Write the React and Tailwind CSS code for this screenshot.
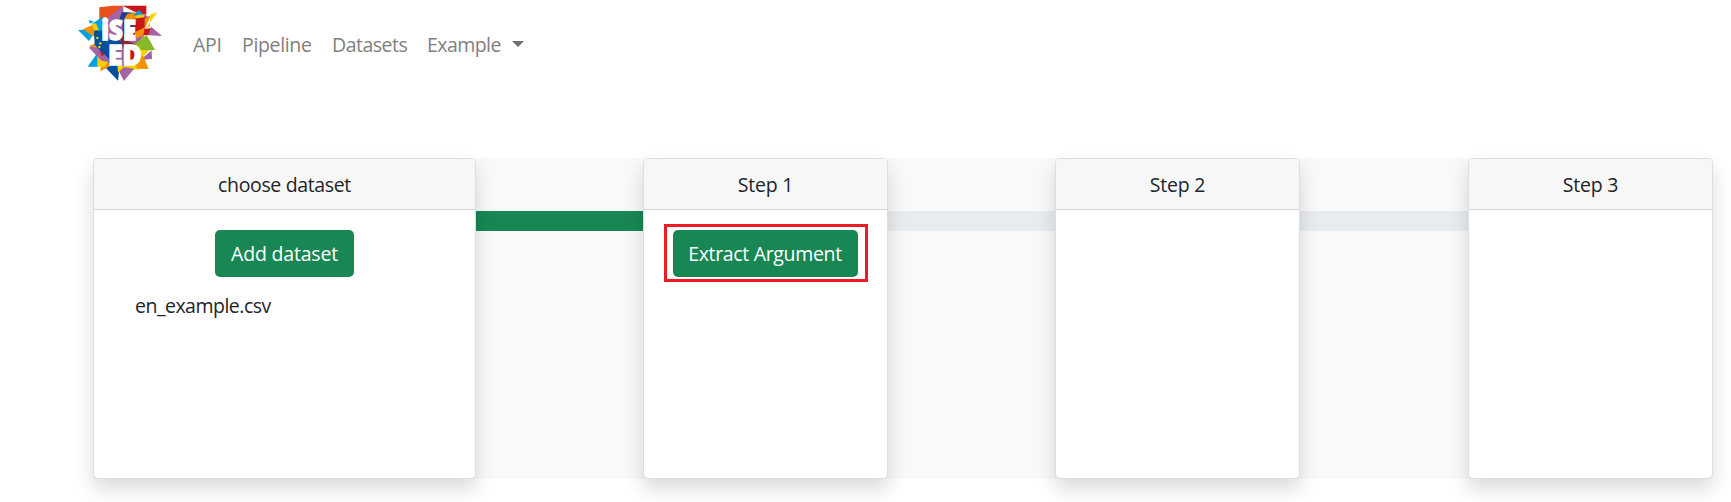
const steps = [
  { title: "choose dataset", w: "w-[383px]", text: "tracking-[-0.35px]" },
  { title: "Step 1", w: "w-[245px]", text: "tracking-[-0.2px]" },
  { title: "Step 2", w: "w-[245px]", text: "tracking-[-0.2px]" },
  { title: "Step 3", w: "w-[245px]", text: "tracking-[-0.2px]" },
];

const shards = [
  ["#e94e1b", "88,22 130,17 160,17 128,62 88,70"],
  ["#a565a5", "160,17 116,50 90,75 90,130 160,130"],
  ["#c91719", "188,50 226,50 224,92 190,110"],
  ["#1d3f8f", "158,50 194,40 194,90 158,110"],
  ["#004f9f", "88,112 140,112 158,130 158,200 112,200"],
  ["#7d2a32", "145,104 190,104 210,140 165,160"],
  ["#a565a5", "130,150 175,140 172,200 130,200"],
  ["#c91719", "165,145 206,140 214,200 165,200"],
  ["#c91719", "158,17 229,17 229,45 194,35"],
  ["#1d3f8f", "156,36 194,38 176,56 148,58"],
  ["#f39200", "172,42 204,36 198,56 162,58"],
  ["#009fe3", "190,46 207,30 224,47"],
  ["#f2c500", "205,44 230,44 224,60 190,58"],
  ["#a565a5", "222,44 240,52 222,64"],
  ["#c91719", "190,56 226,52 222,90 190,96"],
  ["#f39200", "224,56 262,37 240,52 224,88"],
  ["#f7d000", "262,37 240,44 240,80 228,84"],
  ["#f39200", "196,96 224,82 222,114 192,118"],
  ["#c91719", "224,86 250,84 240,105 220,106"],
  ["#a565a5", "243,80 276,108 236,106"],
  ["#a565a5", "175,124 220,106 204,136"],
  ["#86b827", "230,105 255,150 208,152 194,132"],
  ["#f7d000", "206,150 238,150 208,182"],
  ["#a565a5", "211,180 245,151 246,177"],
  ["#f7d000", "158,200 206,170 210,208 178,210"],
  ["#f39200", "190,176 220,168 236,207 202,206"],
  ["#a565a5", "138,197 192,206 162,243"],
  ["#004f9f", "104,200 120,188 150,190 144,242"],
  ["#f7d000", "142,192 163,200 144,218"],
  ["#f39200", "94,182 121,190 121,198 91,214"],
  ["#009fe3", "53,200 84,156 84,200"],
  ["#f7d000", "82,158 116,184 104,200 82,200"],
  ["#a565a5", "57,143 75,130 110,150 118,186 94,182"],
  ["#c91719", "88,148 114,146 96,170"],
  ["#009fe3", "24,90 80,88 57,123"],
  ["#f39200", "38,88 66,76 78,90 75,112"],
  ["#f39200", "57,136 82,132 78,144"],
  ["#004f9f", "72,92 100,84 118,130 118,178 74,134"],
  ["#009fe3", "65,72 98,50 98,92 72,91"],
  ["#f7d000", "65,72 78,70 87,91 72,91"],
  ["#009fe3", "56,61 72,64 60,71"],
];

function Logo() {
  return (
    <svg className="shrink-0" width="100" height="90" viewBox="0 0 300 270" aria-label="iSEED">
      {shards.map(([fill, points]) => (
        <polygon key={points} fill={fill} points={points} />
      ))}
      <circle cx="82" cy="114" r="3.5" fill="#ffe000" />
      <circle cx="91" cy="130" r="3.5" fill="#ffe000" />
      <circle cx="88" cy="141" r="3.5" fill="#ffe000" />
      <text fill="#fff" stroke="#fff" strokeWidth="4" fontFamily="Open Sans, sans-serif" fontWeight="800" fontSize="82">
        <tspan x="94" y="120" textLength="104" lengthAdjust="spacingAndGlyphs">iSE</tspan>
        <tspan x="114" y="195" textLength="101" lengthAdjust="spacingAndGlyphs">ED</tspan>
      </text>
    </svg>
  );
}

function Card({ step, children }) {
  return (
    <section className={`${step.w} relative z-10 flex shrink-0 flex-col rounded-[5px] border border-[#dcdddd] bg-white shadow-[0_10px_20px_rgba(0,0,0,0.15)]`}>
      <h2 className={`${step.text} flex h-[51px] shrink-0 items-center justify-center rounded-t-[4px] border-b border-[#d7d7d7] bg-[#f7f7f7] pt-0.5 leading-[30px]`}>{step.title}</h2>
      {children}
    </section>
  );
}

function Connector({ done, last }) {
  return (
    <div className={`${last ? "w-[168px]" : "w-[167px]"} shrink-0 pt-[53px]`}>
      <div className={done ? "h-5 bg-[#198754]" : "h-5 bg-[#e9ecef]"} />
    </div>
  );
}

export default function App() {
  return (
    <div className="h-[502px] overflow-hidden bg-white font-['Open_Sans',sans-serif] text-[19.5px] text-[#212529]">
      <nav className="flex h-[90px] items-center pl-[70px] text-[#7f7f7f]">
        <Logo />
        <a className="ml-[23px] w-[49px] tracking-[-0.3px]">API</a>
        <a className="w-[90px] tracking-[-0.35px]">Pipeline</a>
        <a className="w-[95px] tracking-[-0.5px]">Datasets</a>
        <a className="flex items-center tracking-[-0.55px]">
          <span className="w-[85px]">Example</span>
          <svg width="12" height="6" viewBox="0 0 12 6" className="-mt-0.5">
            <path d="M0 0h12L6 6z" fill="#6f6f6f" />
          </svg>
        </a>
      </nav>
      <main className="mt-[68px] ml-[93px] flex h-[321px] w-[1620px] bg-[#f8f9fb]">
        <Card step={steps[0]}>
          <button className="mt-5 h-[47px] w-[139px] self-center rounded-[5px] bg-[#198754] pt-px tracking-[-0.2px] text-white">Add dataset</button>
          <p className="mt-[14px] ml-[41px] tracking-[-0.5px]">en_example.csv</p>
        </Card>
        <Connector done />
        <Card step={steps[1]}>
          <div className="mt-[14px] flex h-[58px] w-[204px] self-center border-[3px] border-[#ed1c24] p-[3px] pl-[6px]">
            <button className="h-[47px] w-[185px] rounded-[5px] bg-[#198754] pt-px tracking-[-0.33px] text-white">Extract Argument</button>
          </div>
        </Card>
        <Connector />
        <Card step={steps[2]} />
        <Connector last />
        <Card step={steps[3]} />
      </main>
    </div>
  );
}
